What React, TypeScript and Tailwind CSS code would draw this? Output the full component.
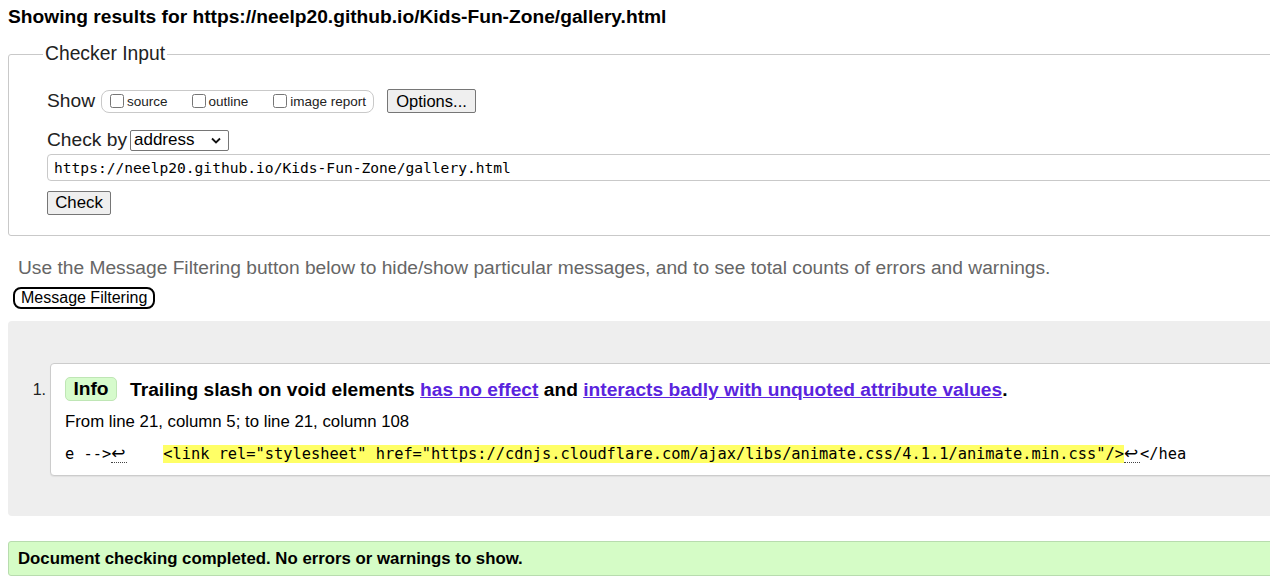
import React from 'react';

const sans = { fontFamily: '"Liberation Sans", Arial, sans-serif' };

const Checkbox: React.FC<{ label: string }> = ({ label }) => (
  <label className="inline-flex items-center gap-[3px] text-[13.5px] text-[#222]">
    <input type="checkbox" className="m-0 h-[14px] w-[14px]" />
    <span className="mt-[3px]">{label}</span>
  </label>
);

const Newline: React.FC = () => (
  <span className="inline-block w-[16px] border-b border-dotted border-[#444] font-['DejaVu_Sans',sans-serif] text-[17px] leading-[17px]">
    ↩
  </span>
);

const App: React.FC = () => {
  return (
    <div className="h-[581px] w-[1270px] overflow-hidden bg-white text-black" style={sans}>
      <div className="w-[1340px] px-2 font-['Liberation_Sans',Arial,sans-serif]">
        <h2 className="mt-[7px] h-[20px] text-[19.2px] font-bold leading-[20px]">
          Showing results for https://neelp20.github.io/Kids-Fun-Zone/gallery.html
        </h2>

        <fieldset className="mt-[16px] rounded-[3px] border border-[#c9c9c9] pb-[20px] pl-[38px]">
          <legend className="-ml-[4px] h-[22px] px-[2px] text-[19.3px] leading-[22px] text-[#222]">
            Checker Input
          </legend>

          <div className="mt-[24px] flex h-[24px] items-center">
            <span className="text-[19.2px] leading-[24px] text-[#222]">Show</span>
            <div className="ml-[6px] flex h-[23px] w-[273px] items-center rounded-[8px] border border-[#c9c9c9] pl-[8px]">
              <Checkbox label="source" />
              <span className="w-[24px]" />
              <Checkbox label="outline" />
              <span className="w-[25px]" />
              <Checkbox label="image report" />
            </div>
            <button className="ml-[13px] h-[24px] w-[89px] rounded-[2px] border border-[#767676] bg-[#efefef] text-[16.5px] leading-[22px] text-black">
              Options...
            </button>
          </div>

          <div className="mt-[16px] flex h-[22px] items-center">
            <span className="text-[19.2px] leading-[22px] text-[#222]">Check by</span>
            <div className="ml-[3px] flex h-[21px] w-[99px] items-center justify-between rounded-[2px] border border-[#767676] bg-white pl-[3px] pr-[7px]">
              <span className="text-[17px] leading-[20px] text-black">address</span>
              <svg width="10" height="7" viewBox="0 0 10 7">
                <path d="M1 1.5 L5 5.5 L9 1.5" fill="none" stroke="#111" strokeWidth="1.8" />
              </svg>
            </div>
          </div>

          <div className="mt-[3px] flex h-[27px] items-center rounded-[4px] border border-[#c9c9c9] pl-[6px]">
            <span className="font-['DejaVu_Sans_Mono',monospace] text-[14.6px] leading-[20px] text-black">
              https://neelp20.github.io/Kids-Fun-Zone/gallery.html
            </span>
          </div>

          <button className="mt-[10px] h-[24px] w-[64px] rounded-[2px] border border-[#767676] bg-[#efefef] text-[16.8px] leading-[22px] text-black">
            Check
          </button>
        </fieldset>

        <p className="mt-[22px] pl-[10px] text-[19.2px] leading-[20px] text-[#666]">
          Use the Message Filtering button below to hide/show particular messages, and to see total counts of errors and warnings.
        </p>

        <button className="ml-[5px] mt-[9px] h-[22px] rounded-[8px] border-2 border-black px-[6px] text-[16px] leading-[18px] text-black">
          Message Filtering
        </button>

        <div className="mt-[11px] rounded-[4px] bg-[#eeeeee] pb-[40px] pt-[42px]">
          <div className="flex">
            <span className="w-[42px] pr-[4px] pt-[17px] text-right text-[16px] leading-[20px] text-[#222]">1.</span>
            <div className="h-[113px] flex-1 rounded-[4px] border border-[#cccccc] bg-white pl-[14px] pt-[13px] shadow-[0_1px_1px_rgba(0,0,0,0.06)]">
              <div className="flex h-[24px] items-center">
                <span className="flex h-[24px] w-[52px] items-center justify-center rounded-[5px] border border-[#bfe6b5] bg-[#d6fbcc] pt-[1px] text-[19.2px] font-bold text-black">
                  Info
                </span>
                <span className="ml-[13px] pt-[2px] text-[19.2px] font-bold leading-[24px] text-black">
                  Trailing slash on void elements{' '}
                  <a href="#" className="text-[#5a24de] underline">has no effect</a> and{' '}
                  <a href="#" className="text-[#5a24de] underline">interacts badly with unquoted attribute values</a>.
                </span>
              </div>
              <p className="mt-[11px] text-[16.8px] leading-[20px] text-black">
                From line 21, column 5; to line 21, column 108
              </p>
              <p className="mt-[13px] whitespace-pre font-['DejaVu_Sans_Mono',monospace] text-[15.35px] leading-[19px] text-black">
                <span>e --&gt;</span>
                <Newline />
                <span className="inline-block w-[36px]" />
                <mark className="bg-[#ffff66] text-black">
                  &lt;link rel="stylesheet" href="https://cdnjs.cloudflare.com/ajax/libs/animate.css/4.1.1/animate.min.css"/&gt;
                </mark>
                <Newline />
                <span>&lt;/hea</span>
              </p>
            </div>
          </div>
        </div>

        <div className="mt-[25px] flex h-[35px] items-center rounded-[3px] border border-[#b8dcae] bg-[#d5fcc6] pl-[9px]">
          <span className="text-[16.8px] font-bold text-black">
            Document checking completed. No errors or warnings to show.
          </span>
        </div>
      </div>
    </div>
  );
};

export default App;
